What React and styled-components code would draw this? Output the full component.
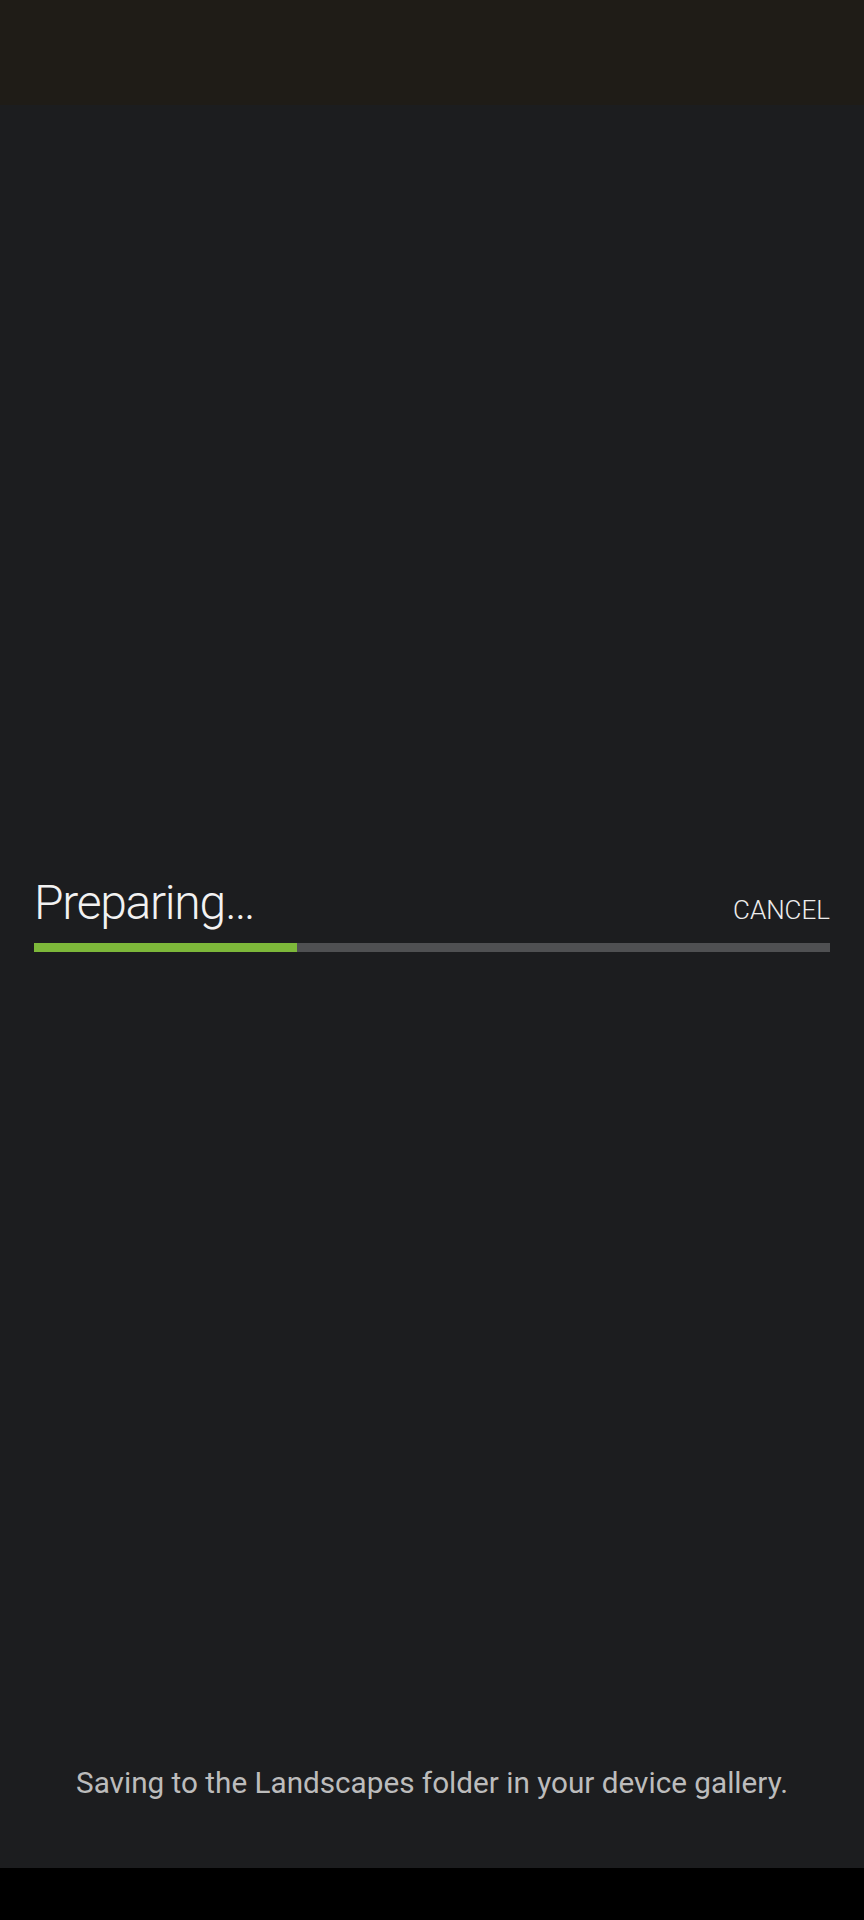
import styled, { createGlobalStyle } from "styled-components";

const GlobalStyle = createGlobalStyle`
  html, body {
    margin: 0;
    padding: 0;
    background: #1c1d1f;
  }
  body {
    font-family: Roboto, "Noto Sans", sans-serif;
  }
`;

const Screen = styled.div`
  width: 864px;
  height: 1920px;
  display: flex;
  flex-direction: column;
  background: #1c1d1f;
`;

const StatusBar = styled.div`
  height: 105px;
  background: #1f1c17;
`;

const Main = styled.main`
  flex: 1;
  display: flex;
  flex-direction: column;
  padding: 0 34px;
`;

const ProgressBlock = styled.section`
  margin-top: 770px;
`;

const Header = styled.div`
  display: flex;
  justify-content: space-between;
  align-items: baseline;
`;

const Title = styled.h1`
  margin: 0;
  font-size: 48px;
  line-height: 56px;
  font-weight: 300;
  letter-spacing: -1.3px;
  color: #f2f2f2;
`;

const CancelButton = styled.button`
  border: 0;
  padding: 0;
  background: none;
  font-family: inherit;
  font-size: 26px;
  font-weight: 300;
  color: #ececec;
  cursor: pointer;
`;

const Track = styled.div`
  margin-top: 12px;
  height: 9px;
  background: #4f5052;
`;

const Fill = styled.div`
  height: 100%;
  background: #7db83a;
`;

const Spacer = styled.div`
  flex: 1;
`;

const Footer = styled.p`
  margin: 0;
  padding-bottom: 68px;
  text-align: center;
  font-size: 29.7px;
  line-height: 34px;
  color: #bcbcbc;
`;

const NavBar = styled.div`
  height: 52px;
  background: #000;
`;

export default function App() {
  const progress = 0.33;
  return (
    <>
      <GlobalStyle />
      <Screen>
        <StatusBar />
        <Main>
          <ProgressBlock>
            <Header>
              <Title>Preparing…</Title>
              <CancelButton>CANCEL</CancelButton>
            </Header>
            <Track>
              <Fill style={{ width: `${progress * 100}%` }} />
            </Track>
          </ProgressBlock>
          <Spacer />
          <Footer>Saving to the Landscapes folder in your device gallery.</Footer>
        </Main>
        <NavBar />
      </Screen>
    </>
  );
}
